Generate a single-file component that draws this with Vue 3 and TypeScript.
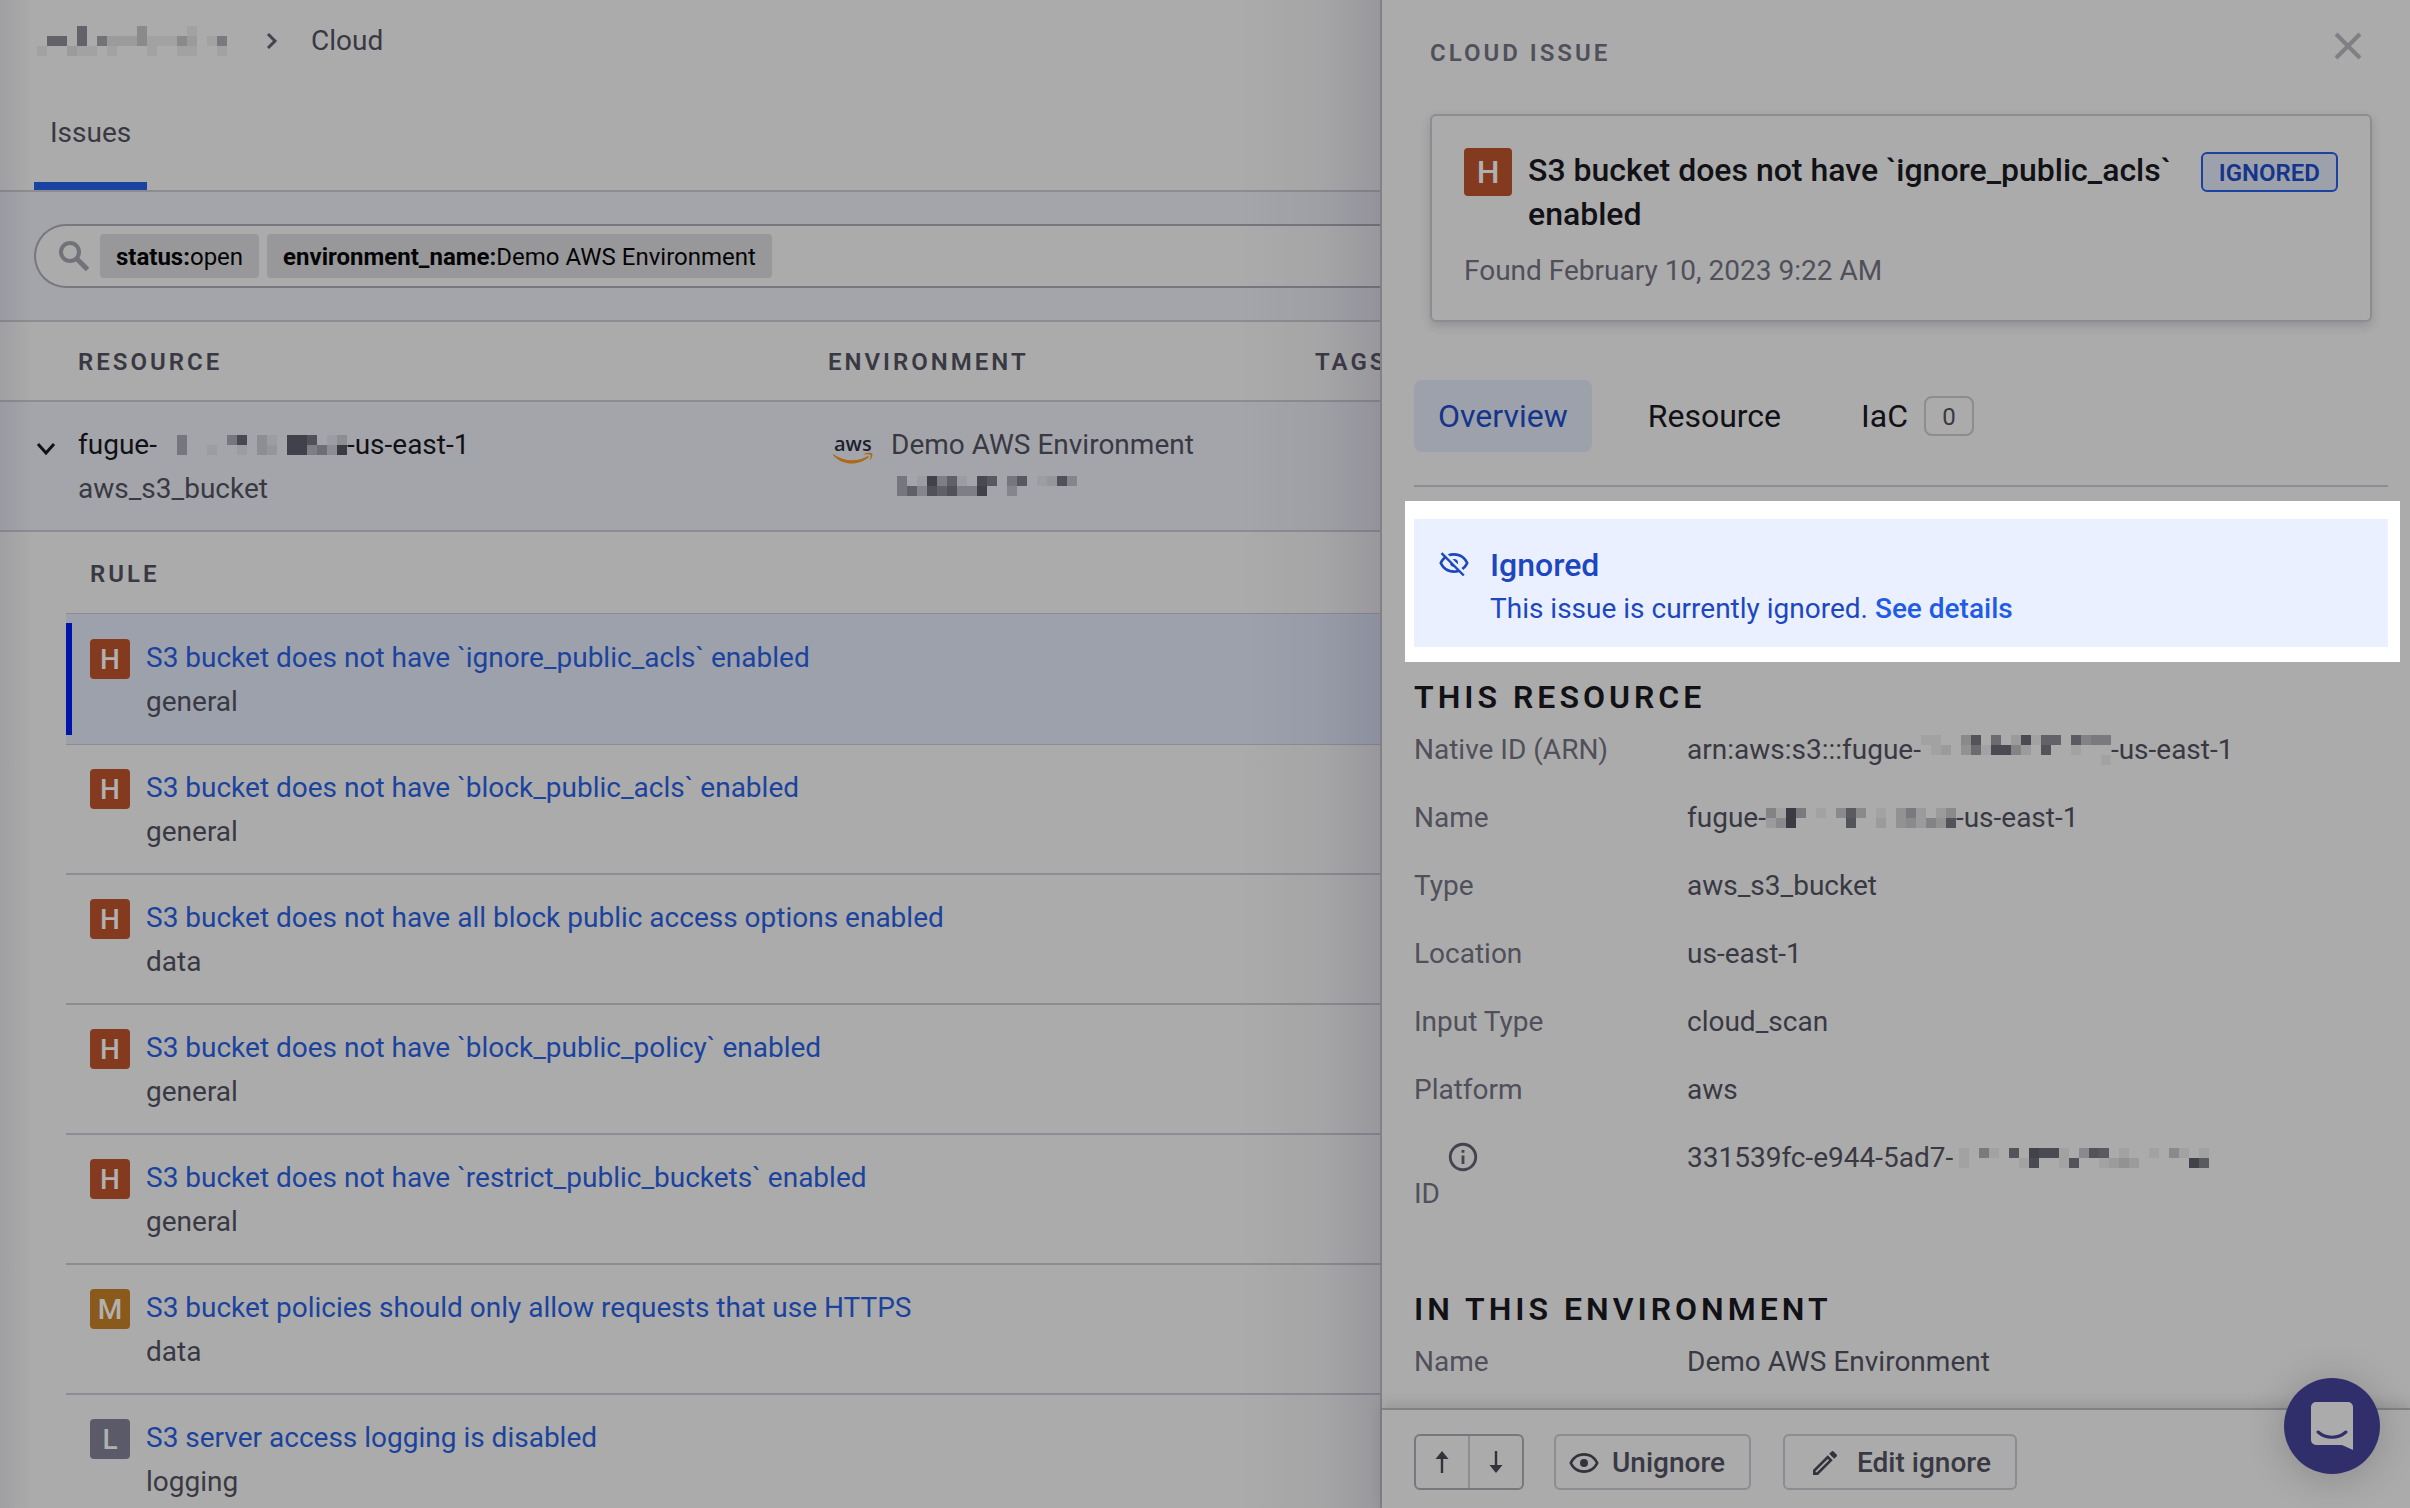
<script setup lang="ts">
import { h, ref, type FunctionalComponent } from 'vue'

interface Rule {
  severity: 'H' | 'M' | 'L'
  title: string
  category: string
}

interface Detail {
  label: string
  before: string
  mask?: string[]
  after?: string
  hint?: boolean
}

const rules: Rule[] = [
  { severity: 'H', title: 'S3 bucket does not have `ignore_public_acls` enabled', category: 'general' },
  { severity: 'H', title: 'S3 bucket does not have `block_public_acls` enabled', category: 'general' },
  { severity: 'H', title: 'S3 bucket does not have all block public access options enabled', category: 'data' },
  { severity: 'H', title: 'S3 bucket does not have `block_public_policy` enabled', category: 'general' },
  { severity: 'H', title: 'S3 bucket does not have `restrict_public_buckets` enabled', category: 'general' },
  { severity: 'M', title: 'S3 bucket policies should only allow requests that use HTTPS', category: 'data' },
  { severity: 'L', title: 'S3 server access logging is disabled', category: 'logging' },
]

const filters = [
  { key: 'status', value: 'open' },
  { key: 'environment_name', value: 'Demo AWS Environment' },
]

const details: Detail[] = [
  {
    label: 'Native ID (ARN)',
    before: 'arn:aws:s3:::fugue-',
    mask: ['11..4b.8.2c199.a566', '.12.381cc52.b..1...', '..................1'],
    after: '-us-east-1',
  },
  {
    label: 'Name',
    before: 'fugue-',
    mask: ['51e6.1.4a4.1.362.24', '24e.....b..2.34253b'],
    after: '-us-east-1',
  },
  { label: 'Type', before: 'aws_s3_bucket' },
  { label: 'Location', before: 'us-east-1' },
  { label: 'Input Type', before: 'cloud_scan' },
  { label: 'Platform', before: 'aws' },
  {
    label: 'ID',
    before: '331539fc-e944-5ad7-',
    mask: ['1.61.b.dcc1.4ba.1..1.41.1', '1.....1c..1b..1232.....da'],
    hint: true,
  },
]

const orgMask = ['....9.....4....1...', '.99.9.7222411142.16', '1..211.1...1..11..1']
const bucketMask = ['..6....6c.31.ddb.13', '..6..1..1.32.dd573e']
const accountMask = ['6.1d591.ca.6a.12b4', '694b9b55d..4......']

const query = ref('')
const activeTab = ref('Overview')

// Redacted value: every hex digit is the strength of one 10px block.
const Mask: FunctionalComponent<{ rows: string[] }> = (props) => {
  const width = props.rows[0].length * 10
  const height = props.rows.length * 10
  const cells = props.rows.flatMap((row, y) =>
    [...row].flatMap((c, x) =>
      c === '.'
        ? []
        : [h('rect', { x: x * 10, y: y * 10, width: 10, height: 10, fill: '#32323c', 'fill-opacity': parseInt(c, 16) / 15 })],
    ),
  )
  return h(
    'svg',
    { width, height, viewBox: `0 0 ${width} ${height}`, 'shape-rendering': 'crispEdges', 'aria-hidden': 'true' },
    cells,
  )
}
Mask.props = ['rows']
</script>

<template>
  <div class="app">
    <main class="page">
      <header class="page-head">
        <nav class="crumbs" aria-label="Breadcrumb">
          <Mask class="crumb-mask" :rows="orgMask" />
          <svg class="crumb-arrow" width="12" height="18" viewBox="0 0 12 18" aria-hidden="true">
            <path d="M2 2l7 7-7 7" fill="none" stroke="#44444e" stroke-width="3" />
          </svg>
          <span>Cloud</span>
        </nav>
        <a class="page-tab" href="#issues">Issues</a>
      </header>

      <div class="filter-bar">
        <label class="search">
          <svg class="search-icon" width="30" height="30" viewBox="0 0 30 30" aria-hidden="true">
            <g fill="none" stroke="#72727a">
              <circle cx="11" cy="11" r="9" stroke-width="4" />
              <path d="M18 18l10.500 10.500" stroke-width="5" />
            </g>
          </svg>
          <span v-for="f in filters" :key="f.key" class="chip"><b>{{ f.key }}:</b>{{ f.value }}</span>
          <input v-model="query" type="text" aria-label="Filter issues" />
        </label>
      </div>

      <table class="resources">
        <colgroup>
          <col class="col-toggle" />
          <col class="col-resource" />
          <col class="col-env" />
          <col />
        </colgroup>
        <thead>
          <tr>
            <th></th>
            <th>RESOURCE</th>
            <th>ENVIRONMENT</th>
            <th>TAGS</th>
          </tr>
        </thead>
        <tbody>
          <tr class="resource-row">
            <td>
              <button class="toggle" aria-label="Collapse resource">
                <svg width="20" height="14" viewBox="0 0 20 14">
                  <path d="M2 2l8 9 8-9" fill="none" stroke="#111116" stroke-width="3" />
                </svg>
              </button>
            </td>
            <td>
              <div class="resource-name">fugue-<Mask :rows="bucketMask" />-us-east-1</div>
              <div>aws_s3_bucket</div>
            </td>
            <td>
              <div class="env">
                <svg class="aws" width="40" height="28" viewBox="0 0 40 28" aria-label="aws">
                  <text x="1" y="15" font-size="20" font-family="Open Sans, sans-serif" font-weight="600" fill="#1b212c">aws</text>
                  <path d="M0 18c11 8 25 8 35 2l1 1c-10 9-27 9-36-2z" fill="#aa6a17" />
                  <path d="M31 18c3-1.500 7-1.500 8-.500s0 5-2.500 7c1-3 1.500-4.500 1-5.500s-3-.8-6.500-.5z" fill="#aa6a17" />
                </svg>
                <div>
                  <div>Demo AWS Environment</div>
                  <div class="account"><Mask :rows="accountMask" /></div>
                </div>
              </div>
            </td>
            <td></td>
          </tr>
          <tr>
            <td colspan="4">
              <table class="rules">
                <thead>
                  <tr><th>RULE</th></tr>
                </thead>
                <tbody>
                  <tr v-for="(rule, i) in rules" :key="rule.title" :class="{ selected: i === 0 }">
                    <td>
                      <div class="rule">
                        <span class="severity" :class="`sev-${rule.severity}`">{{ rule.severity }}</span>
                        <div>
                          <a href="#rule">{{ rule.title }}</a>
                          <div>{{ rule.category }}</div>
                        </div>
                      </div>
                    </td>
                  </tr>
                </tbody>
              </table>
            </td>
          </tr>
        </tbody>
      </table>
      <div class="edge-shade"></div>
    </main>

    <aside class="drawer">
      <header class="drawer-head">
        <h2>CLOUD ISSUE</h2>
        <button class="close" aria-label="Close">
          <svg width="28" height="28" viewBox="0 0 28 28">
            <path d="M2 2l24 24M26 2L2 26" fill="none" stroke="#7f7f84" stroke-width="4" />
          </svg>
        </button>
      </header>

      <section class="card">
        <div class="card-top">
          <span class="severity large sev-H">H</span>
          <h1>S3 bucket does not have `ignore_public_acls` enabled</h1>
          <span class="tag">IGNORED</span>
        </div>
        <p>Found February 10, 2023 9:22 AM</p>
      </section>

      <nav class="tabs">
        <button :class="{ active: activeTab === 'Overview' }" @click="activeTab = 'Overview'">Overview</button>
        <button :class="{ active: activeTab === 'Resource' }" @click="activeTab = 'Resource'">Resource</button>
        <button :class="{ active: activeTab === 'IaC' }" @click="activeTab = 'IaC'">IaC<span class="count">0</span></button>
      </nav>

      <div class="spotlight">
        <div class="alert" role="status">
          <svg class="alert-icon" width="32" height="32" viewBox="0 0 24 24" aria-hidden="true">
            <path
              fill="#1c47c0"
              d="M2 5.270L3.280 4 20 20.720 18.730 22l-3.080-3.080c-1.150.38-2.370.58-3.650.58-5 0-9.270-3.110-11-7.500.69-1.760 1.790-3.310 3.190-4.540L2 5.270M12 9a3 3 0 013 3 3 3 0 01-.17 1L11 9.170A3 3 0 0112 9m0-4.500c5 0 9.270 3.110 11 7.500a11.790 11.790 0 01-4 5.190l-1.420-1.430A9.862 9.862 0 0020.820 12 9.821 9.821 0 0012 6.500c-1.090 0-2.160.18-3.160.5L7.300 5.470c1.440-.62 3.030-.97 4.700-.97M3.180 12A9.821 9.821 0 0012 17.500c.69 0 1.370-.07 2-.21L11.720 15A3.064 3.064 0 019 12.280L5.600 8.870c-.99.850-1.820 1.910-2.420 3.130z"
            />
          </svg>
          <div>
            <strong>Ignored</strong>
            <p>This issue is currently ignored. <a href="#details">See details</a></p>
          </div>
        </div>
      </div>

      <section class="group">
        <h3>THIS RESOURCE</h3>
        <dl>
          <div v-for="d in details" :key="d.label">
            <dt>
              <svg v-if="d.hint" class="hint" width="34" height="34" viewBox="0 0 24 24" aria-hidden="true">
                <path
                  fill="#44444f"
                  d="M11 9h2V7h-2m1 13c-4.410 0-8-3.590-8-8s3.590-8 8-8 8 3.590 8 8-3.590 8-8 8m0-18A10 10 0 002 12a10 10 0 0010 10 10 10 0 0010-10A10 10 0 0012 2m-1 15h2v-6h-2v6z"
                />
              </svg>
              {{ d.label }}
            </dt>
            <dd>{{ d.before }}<Mask v-if="d.mask" :class="{ 'mask-end': !d.after }" :rows="d.mask" />{{ d.after }}</dd>
          </div>
        </dl>
      </section>

      <section class="group env-group">
        <h3>IN THIS ENVIRONMENT</h3>
        <dl>
          <div>
            <dt>Name</dt>
            <dd>Demo AWS Environment</dd>
          </div>
        </dl>
      </section>

      <footer class="actions">
        <div class="stepper">
          <button aria-label="Previous issue">
            <svg width="14" height="22" viewBox="0 0 14 22"><path d="M7 0l6.500 8H8.200v14H5.800V8H.5z" fill="#33333d" /></svg>
          </button>
          <button aria-label="Next issue">
            <svg width="14" height="22" viewBox="0 0 14 22"><path d="M7 22L.5 14h5.300V0h2.400v14h5.300z" fill="#33333d" /></svg>
          </button>
        </div>
        <button class="action unignore">
          <svg width="32" height="32" viewBox="0 0 24 24" aria-hidden="true">
            <path
              fill="#33333d"
              d="M12 9a3 3 0 013 3 3 3 0 01-3 3 3 3 0 01-3-3 3 3 0 013-3m0-4.500c5 0 9.270 3.110 11 7.500-1.730 4.390-6 7.500-11 7.500S2.730 16.390 1 12c1.730-4.390 6-7.500 11-7.500M3.180 12a9.821 9.821 0 0017.640 0 9.821 9.821 0 00-17.640 0z"
            />
          </svg>
          Unignore
        </button>
        <button class="action edit">
          <svg width="32" height="32" viewBox="0 0 24 24" aria-hidden="true">
            <path
              fill="#33333d"
              d="M14.060 9L15 9.940 5.920 19H5v-.92L14.060 9m3.600-6c-.25 0-.51.1-.7.29l-1.830 1.830 3.750 3.750 1.830-1.830c.39-.39.39-1.040 0-1.410l-2.340-2.340c-.2-.2-.45-.29-.71-.29m-3.600 3.190L3 17.250V21h3.750L17.810 9.940l-3.750-3.750z"
            />
          </svg>
          Edit ignore
        </button>
      </footer>
    </aside>

    <button class="chat" aria-label="Open chat">
      <svg width="42" height="48" viewBox="0 0 42 48">
        <path d="M5 0h32a5 5 0 015 5v43l-11-5H5a5 5 0 01-5-5V5a5 5 0 015-5z" fill="#ababab" />
        <path d="M7 30c8 7 20 7 28 0" fill="none" stroke="#302f6b" stroke-width="3" stroke-linecap="round" />
      </svg>
    </button>
  </div>
</template>

<style>
body {
  background: #ababab;
}
</style>

<style scoped>
.app,
.app * {
  box-sizing: border-box;
}

.app {
  display: flex;
  height: 100vh;
  overflow: hidden;
  position: relative;
  background: #ababab;
  color: #393943;
  font-family: Roboto, 'Liberation Sans', sans-serif;
  font-size: 28px;
  line-height: 44px;
}

button {
  font: inherit;
  color: inherit;
  background: none;
  border: 0;
  padding: 0;
}

svg {
  display: block;
  flex: none;
  overflow: visible;
}

h1,
h2,
h3,
p,
dl,
dd {
  margin: 0;
}

a {
  text-decoration: none;
}

/* issue list */
.page {
  flex: 1;
  min-width: 0;
  overflow: hidden;
  position: relative;
}

.edge-shade {
  position: absolute;
  inset: 0;
  pointer-events: none;
  background:
    linear-gradient(to right, rgba(60, 60, 90, 0.1), transparent 32px),
    linear-gradient(to left, rgba(60, 50, 80, 0.16), rgba(60, 50, 80, 0.05) 60px, transparent 140px);
}

.page-head {
  padding: 19px 34px 0;
  border-bottom: 2px solid #8c8c92;
}

.crumbs {
  display: flex;
  align-items: center;
}

.crumb-mask {
  margin-left: 3px;
}

.crumb-arrow {
  margin: 0 33px 0 39px;
}

.page-tab {
  display: block;
  width: max-content;
  margin-top: 48px;
  padding: 0 16px 27px;
  border-bottom: 8px solid #1a42a0;
  color: inherit;
}

.filter-bar {
  padding: 32px 0 32px 34px;
  background: #a4a5aa;
  border-bottom: 2px solid #8c8c92;
}

.search {
  display: flex;
  align-items: center;
  gap: 8px;
  height: 64px;
  padding-left: 23px;
  border: 2px solid #77777e;
  border-right: 0;
  border-radius: 32px 0 0 32px;
  background: #ababab;
}

.search-icon {
  margin-right: 3px;
}

.chip {
  flex: none;
  height: 44px;
  padding: 1px 16px 0;
  border-radius: 4px;
  background: #98989a;
  color: #050507;
  font-size: 24px;
}

.chip b {
  font-weight: 700;
}

.search input {
  flex: 1;
  min-width: 0;
  border: 0;
  outline: 0;
  background: none;
  font: inherit;
}

table {
  width: 100%;
  border-spacing: 0;
  table-layout: fixed;
}

th,
td {
  padding: 0;
  text-align: left;
  vertical-align: top;
}

th {
  height: 78px;
  padding-top: 2px;
  vertical-align: middle;
  font-size: 24px;
  line-height: 28px;
  font-weight: 600;
  letter-spacing: 3px;
  white-space: nowrap;
}

.col-toggle {
  width: 78px;
}

.col-resource {
  width: 750px;
}

.col-env {
  width: 487px;
}

.resource-row td {
  padding: 21px 0 19px;
  border-top: 2px solid #8c8c92;
  border-bottom: 2px solid #8c8c92;
  background: #a4a5aa;
}

.toggle {
  display: block;
  margin: 19px 0 0 36px;
}

.resource-name,
dd {
  display: flex;
  align-items: center;
}

.resource-name {
  color: #111116;
}

.env {
  display: flex;
  gap: 18px;
}

.aws {
  margin: 13px 0 0 5px;
}

.account {
  padding: 9px 0 0 6px;
}

.rules {
  width: auto;
  min-width: calc(100% - 66px);
  margin-left: 66px;
}

.rules th {
  height: 81px;
  padding-left: 24px;
}

.rules td {
  padding: 21px 0 19px;
  height: 130px;
  border-top: 2px solid #8c8c92;
}

.rules .selected td {
  height: 131px;
  padding: 22px 0 20px;
  border-top-width: 1px;
  background: #9ca1ac;
}

.rules .selected + tr td {
  height: 129px;
  border-top-width: 1px;
}

.rule {
  display: flex;
  gap: 16px;
  padding-left: 24px;
  position: relative;
}

.selected .rule::before {
  content: '';
  position: absolute;
  left: 0;
  top: -13px;
  width: 6px;
  height: 112px;
  background: #0014ac;
}

.rule a {
  display: block;
  color: #1b439e;
}

.severity {
  flex: none;
  width: 40px;
  height: 40px;
  margin-top: 3px;
  border-radius: 4px;
  color: #b0b0b0;
  font-weight: 500;
  line-height: 42px;
  text-align: center;
}

.severity.large {
  width: 48px;
  height: 48px;
  margin: 0;
  font-size: 32px;
  line-height: 48px;
}

.sev-H {
  background: #833a1e;
}

.sev-M {
  background: #8a591c;
}

.sev-L {
  background: #5b5a69;
}

/* issue drawer */
.drawer {
  flex: 0 0 1030px;
  display: flex;
  flex-direction: column;
  height: 100vh;
  border-left: 2px solid #828286;
  background: #ababab;
}

.drawer-head {
  display: flex;
  justify-content: space-between;
  align-items: flex-start;
  height: 114px;
  padding: 32px 48px 0;
}

.drawer-head h2 {
  margin-top: 7px;
  color: #50505b;
  font-size: 24px;
  line-height: 28px;
  font-weight: 600;
  letter-spacing: 3px;
}

.card {
  margin: 0 38px 0 48px;
  padding: 32px 32px 27px;
  border: 2px solid #8c8c92;
  border-radius: 6px;
  box-shadow: 0 4px 10px rgba(40, 40, 60, 0.18);
}

.card-top {
  display: flex;
  gap: 16px;
}

.card h1 {
  flex: 1;
  color: #111116;
  font-size: 32px;
  line-height: 44px;
  font-weight: 500;
}

.tag {
  flex: none;
  height: 40px;
  margin-top: 4px;
  padding: 0 16px;
  border: 2px solid #1a42a0;
  border-radius: 6px;
  background: #9ca1ac;
  color: #14358a;
  font-size: 24px;
  line-height: 38px;
  font-weight: 600;
}

.card p {
  margin-top: 13px;
  color: #50505b;
}

.tabs {
  display: flex;
  gap: 32px;
  margin: 58px 22px 0 32px;
  padding-bottom: 33px;
  border-bottom: 2px solid #8c8c92;
}

.tabs button {
  display: flex;
  align-items: center;
  height: 72px;
  padding: 0 24px;
  border-radius: 8px;
  color: #111116;
  font-size: 32px;
}

.tabs .active {
  background: #9ca1ac;
  color: #14358a;
}

.count {
  width: 50px;
  height: 40px;
  margin-left: 16px;
  border: 2px solid #8c8c92;
  border-radius: 8px;
  color: #393943;
  font-size: 24px;
  line-height: 38px;
  text-align: center;
}

.spotlight {
  margin: 14px 10px 0 23px;
  padding: 18px 12px 15px 9px;
  background: #fff;
}

.alert {
  display: flex;
  gap: 20px;
  padding: 24px 24px 16px;
  background: #eaf0ff;
  color: #1c47c0;
}

.alert-icon {
  margin-top: 4px;
}

.alert strong {
  display: block;
  font-size: 32px;
  font-weight: 500;
}

.alert a {
  color: #1f5be6;
  font-weight: 500;
}

.group {
  margin: 15px 22px 0 32px;
}

.env-group {
  margin-top: 77px;
}

.group h3 {
  color: #111116;
  font-size: 32px;
  line-height: 40px;
  font-weight: 600;
  letter-spacing: 4px;
}

dl {
  display: flex;
  flex-direction: column;
  gap: 32px;
  margin-top: 15px;
  line-height: 36px;
}

dl > div {
  display: flex;
  align-items: flex-start;
}

dt {
  flex: none;
  width: 273px;
  color: #50505b;
}

.hint {
  margin: 0 0 2px 32px;
}

.mask-end {
  margin-left: 6px;
}

.actions {
  display: flex;
  margin-top: auto;
  padding: 24px 32px 18px;
  border-top: 2px solid #828286;
  box-shadow: 0 -4px 12px rgba(40, 40, 60, 0.15);
  font-weight: 500;
}

.stepper {
  display: flex;
  width: 110px;
  height: 56px;
  border: 2px solid #77777e;
  border-radius: 6px;
}

.stepper button {
  flex: 1;
  display: grid;
  place-items: center;
}

.stepper button + button {
  border-left: 2px solid #8c8c92;
}

.action {
  display: flex;
  align-items: center;
  height: 56px;
  padding-top: 2px;
  border: 2px solid #8c8c92;
  border-radius: 6px;
}

.unignore {
  margin: 0 32px 0 30px;
  padding-left: 12px;
  padding-right: 24px;
  gap: 12px;
}

.edit {
  padding-left: 24px;
  padding-right: 24px;
  gap: 16px;
}

.chat {
  position: absolute;
  right: 30px;
  bottom: 34px;
  display: grid;
  place-items: center;
  width: 96px;
  height: 96px;
  border-radius: 50%;
  background: #302f6b;
  box-shadow: 0 4px 40px rgba(0, 0, 0, 0.2);
}
</style>
